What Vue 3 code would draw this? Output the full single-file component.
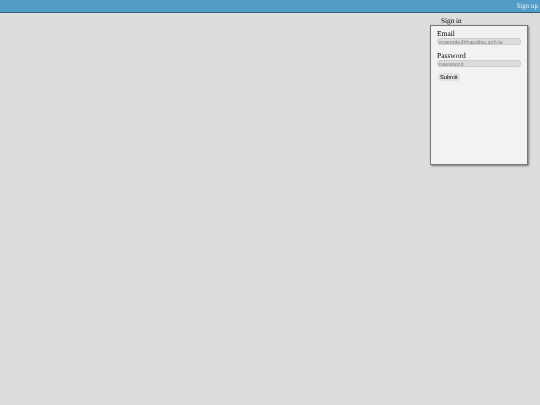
<template>
  <div class="page">
    <header class="topbar">
      <a class="signup" href="#">Sign up</a>
    </header>
    <main class="content">
      <section class="signin">
        <h2 class="signin-title">Sign in</h2>
        <form class="signin-box" @submit.prevent>
          <label class="field">
            <span class="field-label">Email</span>
            <input class="field-input" type="text" placeholder="example@haudisu.sch.je" />
          </label>
          <label class="field">
            <span class="field-label">Password</span>
            <input class="field-input" type="password" placeholder="password" />
          </label>
          <button class="submit" type="submit">Submit</button>
        </form>
      </section>
    </main>
  </div>
</template>

<script setup>
</script>

<style>
html,
body {
  margin: 0;
  background: #dddddd;
}
</style>

<style scoped>
.page {
  width: 540px;
  height: 405px;
  overflow: hidden;
  background: #dddddd;
  font-family: "Liberation Serif", "Times New Roman", serif;
  color: #000;
  text-rendering: geometricPrecision;
  will-change: transform;
}

.topbar {
  height: 12px;
  background: #539cc8;
  border-bottom: 1px solid #2f5f7d;
  display: flex;
  align-items: center;
  justify-content: flex-end;
  padding-right: 2px;
}

.signup {
  color: #e8f2f8;
  font-size: 7px;
  text-decoration: none;
}

.content {
  display: flex;
  justify-content: flex-end;
  padding: 3px 12px 0 0;
}

.signin {
  width: 98px;
}

.signin-title {
  margin: 0;
  padding: 1px 0 0 11px;
  font-size: 7.2px;
  font-weight: normal;
  line-height: 8px;
}

.signin-box {
  box-sizing: border-box;
  height: 140px;
  padding: 3px 6px;
  background: #f2f2f2;
  border: 1px solid #777;
  box-shadow: 1px 1px 2px #777;
  display: flex;
  flex-direction: column;
  align-items: flex-start;
}

.field {
  display: block;
  width: 100%;
  margin-bottom: 6px;
}

.field-label {
  display: block;
  font-size: 7.5px;
  line-height: 9px;
}

.field-input {
  display: block;
  box-sizing: border-box;
  width: 84px;
  height: 7px;
  padding: 0 1px;
  border: 1px solid #ccc;
  border-radius: 3px;
  background: #dcdcdc;
  font-family: "Liberation Sans", Arial, sans-serif;
  font-size: 5.7px;
  outline: none;
}

.field-input::placeholder {
  color: #808080;
  opacity: 1;
}

.submit {
  height: 8px;
  margin: 0 0 0 1px;
  padding: 0 2px;
  border: none;
  border-radius: 3px;
  background: #e2e2e2;
  color: #000;
  font-family: "Liberation Sans", Arial, sans-serif;
  font-size: 5.7px;
  line-height: 8px;
}
</style>
